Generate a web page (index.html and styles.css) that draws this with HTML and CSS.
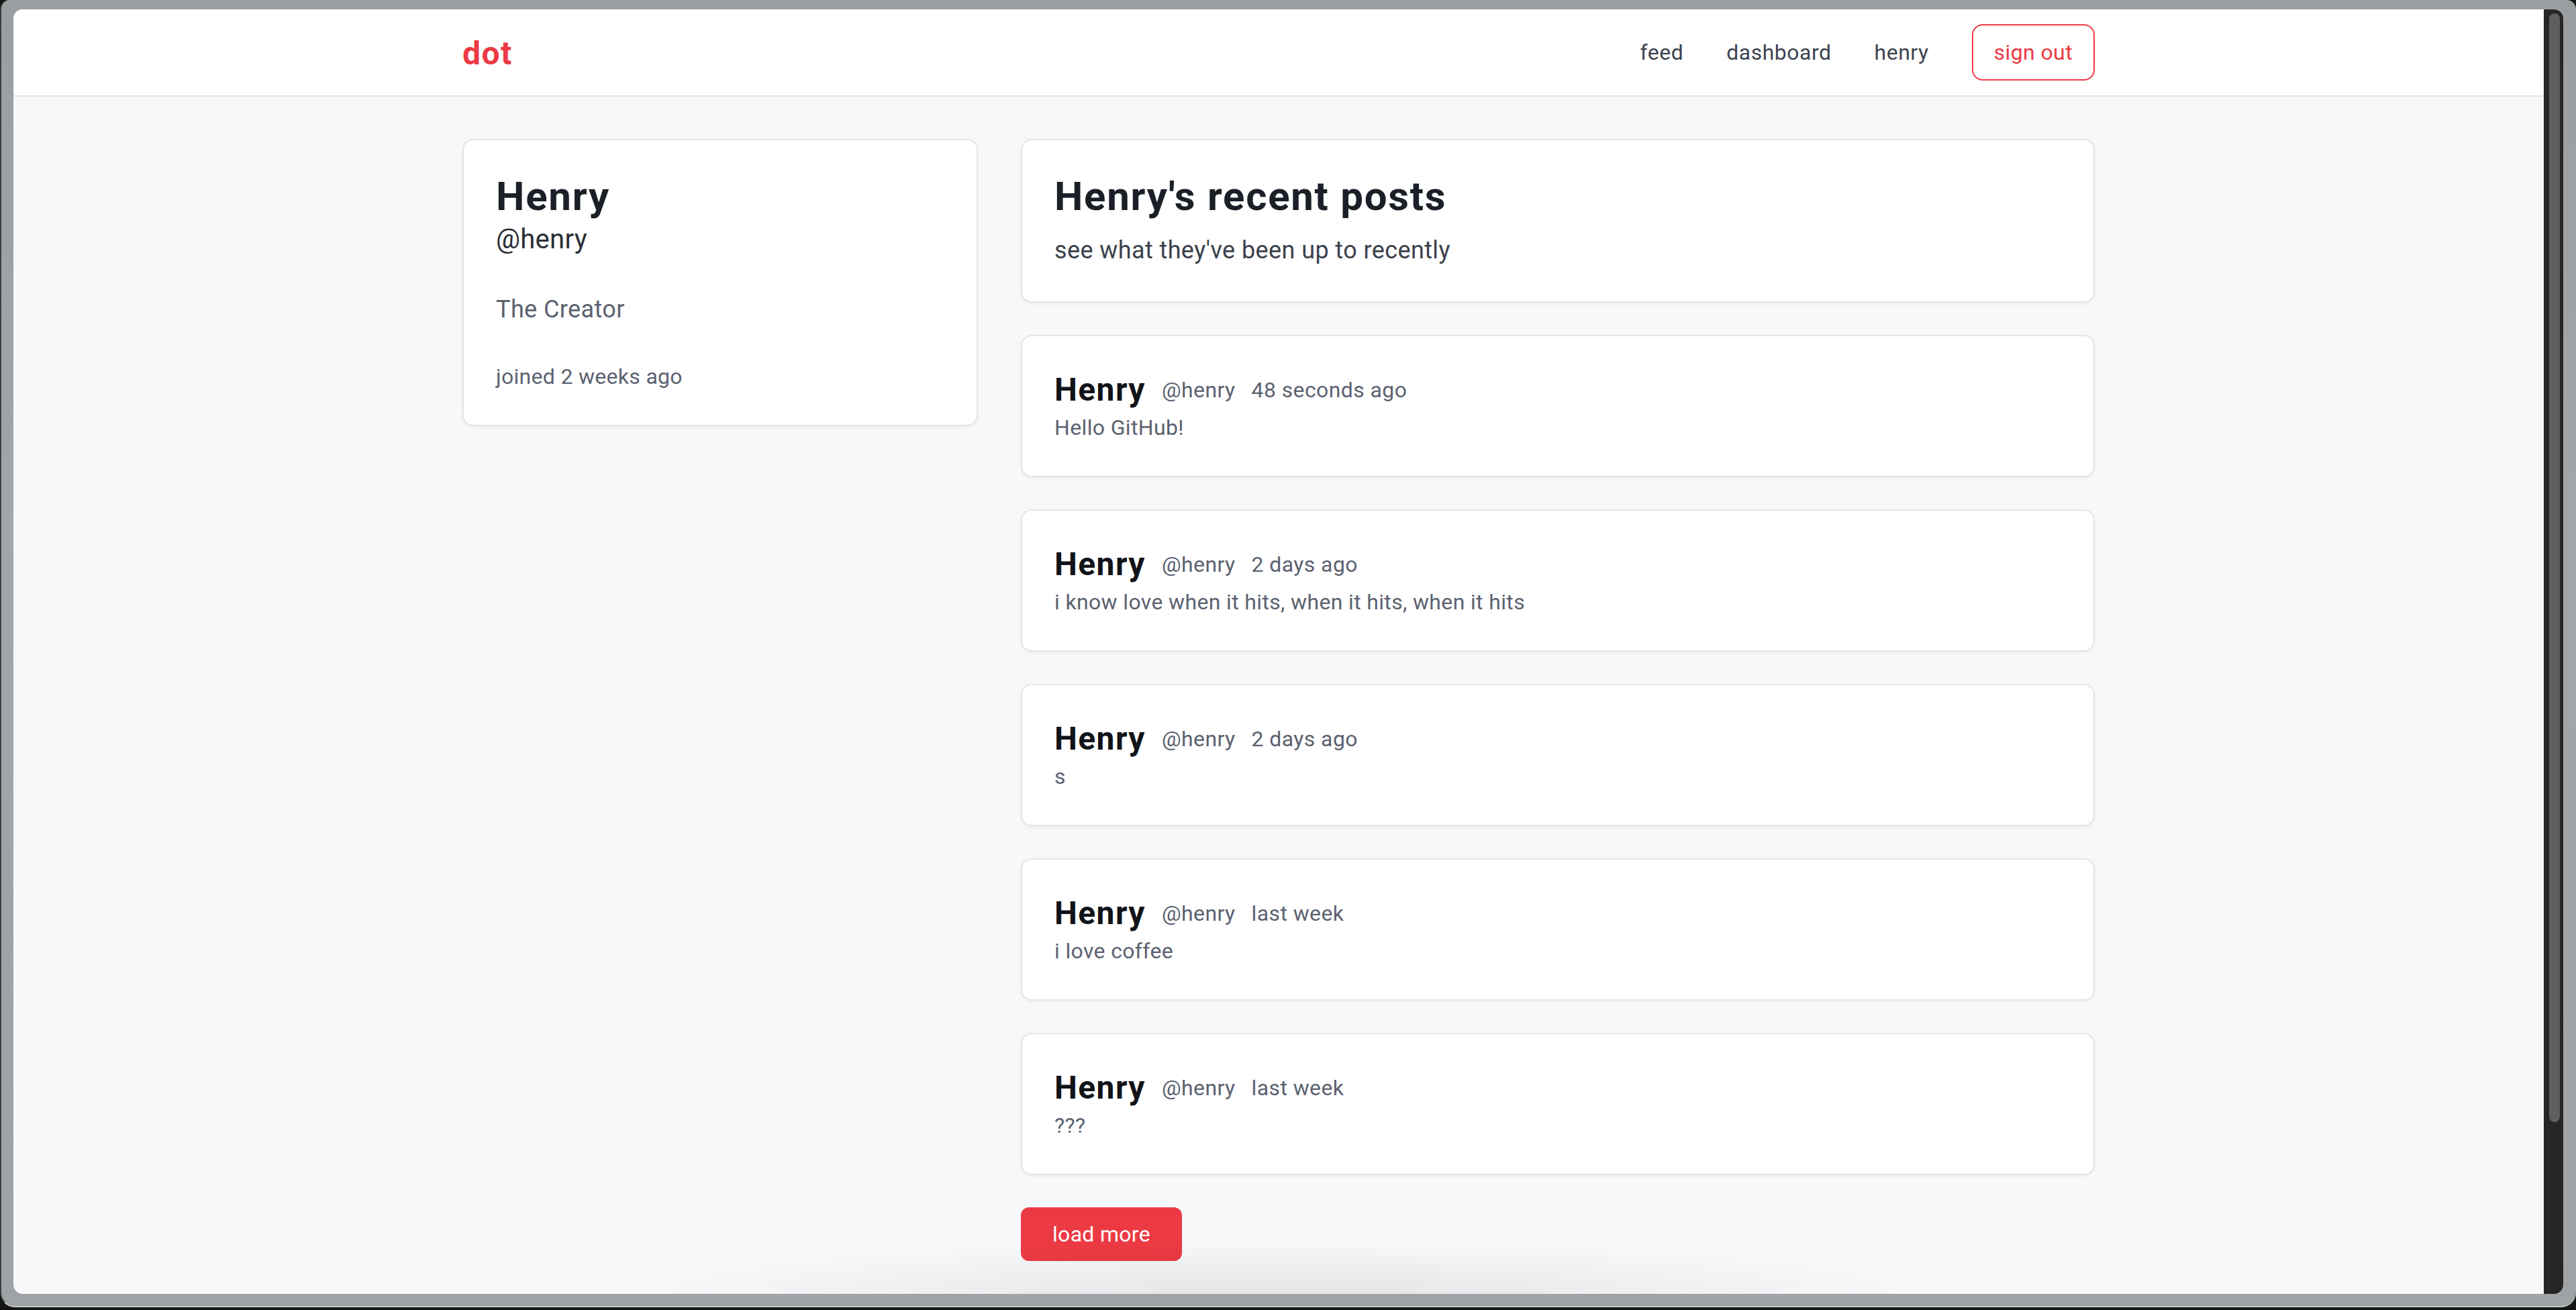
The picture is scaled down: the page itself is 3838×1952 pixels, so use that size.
FILE: index.html
```html
<!DOCTYPE html>
<html lang="en">
<head>
<meta charset="utf-8">
<title>dot — Henry</title>
<link rel="stylesheet" href="styles.css">
</head>
<body>
<div class="frame">
  <div class="window">
    <div class="page">
      <header class="nav">
        <div class="container nav-inner">
          <a class="logo" href="#">dot</a>
          <nav class="links">
            <a class="link" href="#">feed</a>
            <a class="link" href="#">dashboard</a>
            <a class="link" href="#">henry</a>
            <button class="signout" type="button">sign out</button>
          </nav>
        </div>
      </header>
      <main class="container main">
        <aside class="col-left">
          <div class="card profile">
            <h1 class="profile-name">Henry</h1>
            <div class="profile-handle">@henry</div>
            <p class="profile-bio">The Creator</p>
            <p class="profile-joined">joined 2 weeks ago</p>
          </div>
        </aside>
        <section class="col-right">
          <div class="card intro">
            <h2 class="intro-title">Henry's recent posts</h2>
            <p class="intro-sub">see what they've been up to recently</p>
          </div>
          <article class="card post">
            <div class="post-meta"><span class="post-name">Henry</span><span class="post-handle">@henry</span><span class="post-time">48 seconds ago</span></div>
            <p class="post-body">Hello GitHub!</p>
          </article>
          <article class="card post">
            <div class="post-meta"><span class="post-name">Henry</span><span class="post-handle">@henry</span><span class="post-time">2 days ago</span></div>
            <p class="post-body">i know love when it hits, when it hits, when it hits</p>
          </article>
          <article class="card post">
            <div class="post-meta"><span class="post-name">Henry</span><span class="post-handle">@henry</span><span class="post-time">2 days ago</span></div>
            <p class="post-body">s</p>
          </article>
          <article class="card post">
            <div class="post-meta"><span class="post-name">Henry</span><span class="post-handle">@henry</span><span class="post-time">last week</span></div>
            <p class="post-body">i love coffee</p>
          </article>
          <article class="card post">
            <div class="post-meta"><span class="post-name">Henry</span><span class="post-handle">@henry</span><span class="post-time">last week</span></div>
            <p class="post-body">???</p>
          </article>
          <button class="load-more" type="button">load more</button>
        </section>
      </main>
      <div class="dock-shadow"></div>
    </div>
    <div class="scrollbar"><div class="thumb"></div></div>
  </div>
</div>
</body>
</html>
```
FILE: styles.css
```css
* { box-sizing: border-box; }

html, body {
  margin: 0;
  padding: 0;
}

body {
  width: 3838px;
  height: 1952px;
  overflow: hidden;
  background: #141613;
  font-family: Roboto, "Liberation Sans", Arial, sans-serif;
}

.frame {
  height: 1948px;
  padding: 14px 19px 20px 18px;
  background: linear-gradient(#9b9ea1, #a3a6a9 40%, #a0a3a6);
  border-radius: 14px 14px 22px 22px;
  border-left: 2px solid #3c3e40;
  border-bottom: 2px solid #c6c9cc;
}

.window {
  display: flex;
  height: 1914px;
  border-radius: 14px;
  overflow: hidden;
}

.page {
  position: relative;
  width: 3770px;
  height: 100%;
  background: #f7f8fa;
  overflow: hidden;
}

.scrollbar {
  width: 29px;
  height: 100%;
  background: #262626;
  padding: 6px 5px 0 8px;
}

.thumb {
  width: 16px;
  height: 1652px;
  background: #5f5f5f;
  border-radius: 8px;
}

.container {
  max-width: 2560px;
  margin: 0 auto;
  padding: 0 64px;
}

/* nav */
.nav {
  height: 130px;
  background: #ffffff;
  border-bottom: 2px solid #e2e3e9;
}

.nav-inner {
  height: 100%;
  display: flex;
  align-items: center;
  justify-content: space-between;
}

.logo {
  font-size: 48px;
  line-height: 64px;
  font-weight: 700;
  letter-spacing: 1.5px;
  color: #ec3a44;
  text-decoration: none;
  margin-top: 4px;
}

.links {
  display: flex;
  align-items: center;
  gap: 64px;
}

.link {
  font-size: 32px;
  line-height: 48px;
  letter-spacing: 0.5px;
  color: #3d4451;
  text-decoration: none;
}

.signout {
  font-family: inherit;
  font-size: 32px;
  line-height: 48px;
  letter-spacing: 0.4px;
  color: #ec3a44;
  background: #ffffff;
  border: 2px solid #ec3a44;
  border-radius: 16px;
  padding: 16px 31px;
}

/* main */
.main {
  display: grid;
  grid-template-columns: repeat(3, 1fr);
  gap: 64px;
  padding-top: 63px;
  align-items: start;
}

.col-right {
  grid-column: span 2;
  display: flex;
  flex-direction: column;
  gap: 48px;
}

.card {
  background: #ffffff;
  border: 2px solid #e4e5ea;
  border-radius: 16px;
  box-shadow: 0 2px 4px rgba(0, 0, 0, 0.05);
  padding: 48px;
}

.profile-name {
  margin: 0;
  font-size: 60px;
  line-height: 72px;
  font-weight: 700;
  letter-spacing: 1.8px;
  color: #1b2028;
}

.profile-handle {
  font-size: 40px;
  line-height: 56px;
  letter-spacing: 0.3px;
  color: #2a2e35;
}

.profile-bio {
  margin: 48px 0 0;
  font-size: 36px;
  line-height: 56px;
  letter-spacing: 0.4px;
  color: #5b6270;
}

.profile-joined {
  margin: 48px 0 0;
  font-size: 32px;
  line-height: 48px;
  letter-spacing: 0.3px;
  color: #5b6270;
}

.intro-title {
  margin: 0;
  font-size: 60px;
  line-height: 72px;
  font-weight: 700;
  letter-spacing: 1.7px;
  color: #1b2028;
}

.intro-sub {
  margin: 16px 0 0;
  font-size: 36px;
  line-height: 56px;
  letter-spacing: 0.4px;
  color: #3b414c;
}

.post-meta {
  display: flex;
  align-items: center;
}

.post-name {
  font-size: 48px;
  line-height: 64px;
  font-weight: 700;
  letter-spacing: 1.4px;
  color: #111318;
}

.post-handle,
.post-time {
  margin-left: 24px;
  font-size: 32px;
  line-height: 48px;
  letter-spacing: 0.4px;
  color: #5b6270;
}

.post-body {
  margin: 0;
  font-size: 32px;
  line-height: 48px;
  letter-spacing: 0.35px;
  color: #5b6270;
}

.load-more {
  align-self: flex-start;
  font-family: inherit;
  font-size: 32px;
  line-height: 48px;
  letter-spacing: 0.3px;
  color: #ffffff;
  background: #ec3a44;
  border: none;
  border-radius: 12px;
  padding: 16px 47px;
}

.dock-shadow {
  position: absolute;
  left: 900px;
  width: 1980px;
  bottom: 0;
  height: 80px;
  background: radial-gradient(ellipse 50% 100% at 50% 100%, rgba(0, 0, 0, 0.08), rgba(0, 0, 0, 0.03) 60%, rgba(0, 0, 0, 0) 100%);
  pointer-events: none;
}
```
